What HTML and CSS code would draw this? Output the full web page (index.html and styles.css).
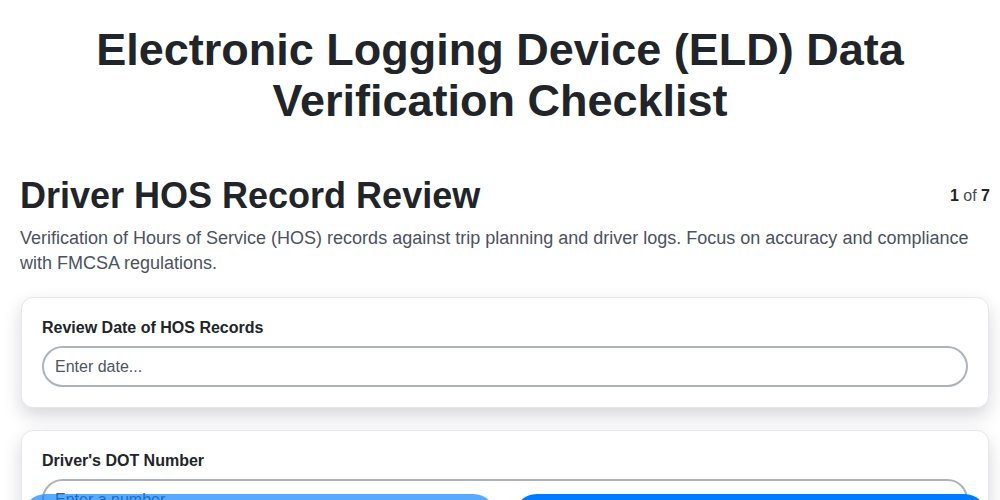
FILE: index.html
```html
<!DOCTYPE html>
<html lang="en">
<head>
<meta charset="utf-8">
<title>ELD Data Verification Checklist</title>
<link rel="stylesheet" href="styles.css">
</head>
<body>
<header class="page-header">
  <h1 class="page-title">Electronic Logging Device (ELD) Data Verification Checklist</h1>
</header>
<main class="main">
  <div class="section-head">
    <h2 class="section-title">Driver HOS Record Review</h2>
    <div class="step-count"><b>1</b> of <b>7</b></div>
  </div>
  <p class="section-desc">Verification of Hours of Service (HOS) records against trip planning and driver logs. Focus on accuracy and compliance with FMCSA regulations.</p>
  <div class="card">
    <label class="field-label" for="f1">Review Date of HOS Records</label>
    <input class="field-input" id="f1" type="text" placeholder="Enter date...">
  </div>
  <div class="card">
    <label class="field-label" for="f2">Driver's DOT Number</label>
    <input class="field-input" id="f2" type="text" placeholder="Enter a number...">
  </div>
  <div class="card">
    <label class="field-label" for="f3">Reviewer Name</label>
    <input class="field-input" id="f3" type="text" placeholder="Enter text...">
  </div>
</main>
<footer class="nav-bar">
  <button class="nav-btn nav-prev" disabled>Previous</button>
  <button class="nav-btn nav-next">Next</button>
</footer>
</body>
</html>
```
FILE: styles.css
```css
* { box-sizing: border-box; }
html, body { margin: 0; padding: 0; background: #ffffff; }
body {
  font-family: "Liberation Sans", Arial, sans-serif;
  color: #212529;
}
.page-header {
  padding: 24px 20px 0;
}
.page-title {
  margin: 0;
  text-align: center;
  font-size: 45px;
  line-height: 51px;
  font-weight: 700;
  color: #212529;
}
.main {
  padding: 48px 10px 120px 20px;
}
.section-head {
  display: flex;
  justify-content: space-between;
  align-items: center;
}
.section-title {
  margin: 0;
  font-size: 36px;
  line-height: 43px;
  font-weight: 700;
  color: #212529;
}
.step-count {
  font-size: 16px;
  line-height: 24px;
  color: #444b52;
}
.step-count b { color: #212529; }
.section-desc {
  margin: 9px 0 21px;
  font-size: 18px;
  line-height: 25.2px;
  color: #4a5260;
}
.card {
  background: #ffffff;
  border: 1px solid #e6e6ee;
  border-radius: 12px;
  box-shadow: 0 8px 18px rgba(20, 20, 40, 0.17);
  padding: 20px;
  margin: 0 1px 22px;
  display: flex;
  flex-direction: column;
}
.field-label {
  font-size: 16px;
  line-height: 19px;
  font-weight: 700;
  color: #212529;
  margin-bottom: 9px;
}
.field-input {
  height: 41px;
  width: 100%;
  border: 2px solid #adb3ba;
  border-radius: 22px;
  padding: 0 11px;
  font-family: "Liberation Sans", Arial, sans-serif;
  font-size: 16px;
  color: #212529;
  background: #ffffff;
  outline: none;
}
.field-input::placeholder { color: #4e5560; opacity: 1; }
.nav-bar {
  position: fixed;
  left: 22px;
  right: 12px;
  bottom: -42px;
  height: 48px;
  display: flex;
  gap: 16px;
}
.nav-btn {
  flex: 1;
  border: none;
  border-radius: 24px;
  background: #007bff;
  color: #ffffff;
  font-family: "Liberation Sans", Arial, sans-serif;
  font-size: 16px;
  font-weight: 700;
}
.nav-prev { opacity: 0.65; }
```
